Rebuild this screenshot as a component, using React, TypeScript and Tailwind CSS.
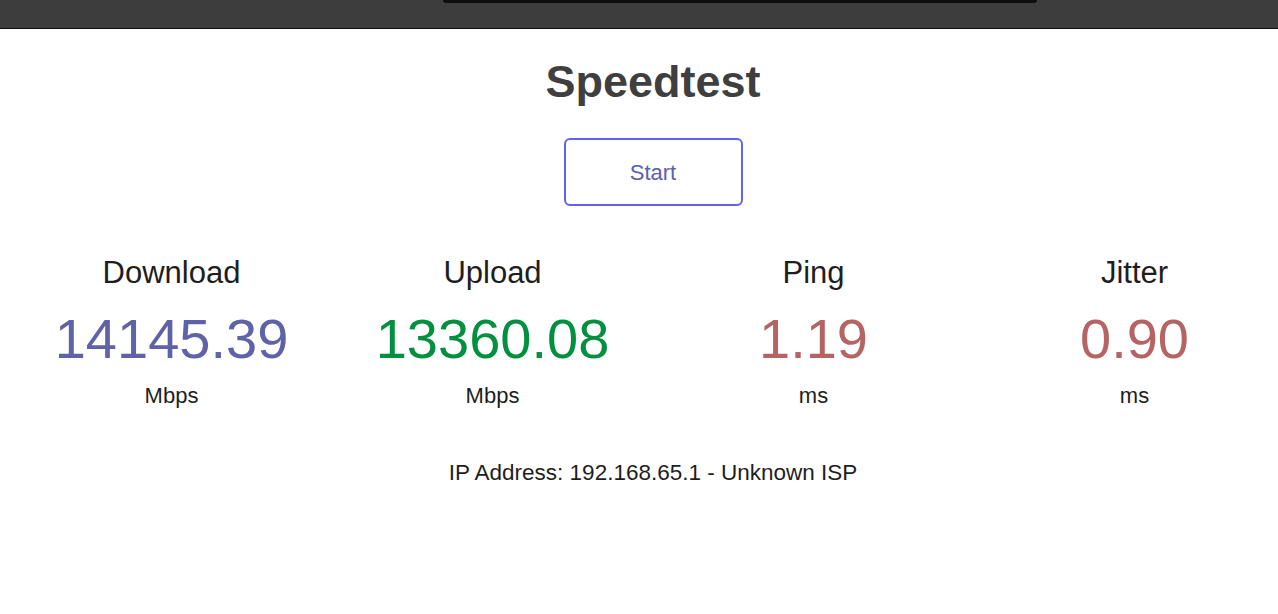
export default function App() {
  const stats = [
    { label: "Download", value: "14145.39", unit: "Mbps", color: "text-[#6062a8]" },
    { label: "Upload", value: "13360.08", unit: "Mbps", color: "text-[#00903e]" },
    { label: "Ping", value: "1.19", unit: "ms", color: "text-[#b56363]" },
    { label: "Jitter", value: "0.90", unit: "ms", color: "text-[#b56363]" },
  ];

  return (
    <div className="min-h-screen overflow-hidden bg-white font-['Liberation_Sans',Arial,sans-serif]">
      {/* browser chrome strip */}
      <div className="h-[29px] bg-[#3d3d3d] border-b border-[#101010]">
        <div className="ml-[443px] w-[594px] h-[3px] rounded-b-[4px] bg-[#0d0d0d]" />
      </div>

      {/* page is a bit wider than the window */}
      <div className="w-[1306px]">
        <div className="flex flex-col items-center">
          <h1 className="mt-[30px] text-[45px] leading-none font-bold text-[#3f3f3f]">Speedtest</h1>

          <button className="mt-[34px] w-[179px] h-[68px] rounded-[6px] border-2 border-[#6161f2] text-[22px] text-[#5c5db4]">
            Start
          </button>
        </div>

        {/* results */}
        <div className="mt-[51px] flex justify-center">
          {stats.map((s) => (
            <div key={s.label} className="w-[321px] flex flex-col items-center">
              <div className="text-[31px] leading-none text-[#1e1e1e]">{s.label}</div>
              <div className={`mt-[23px] text-[56px] leading-none ${s.color}`}>{s.value}</div>
              <div className="mt-[18px] text-[22px] leading-none text-[#1e1e1e]">{s.unit}</div>
            </div>
          ))}
        </div>

        <p className="mt-[55px] text-center text-[22.5px] leading-none text-[#1e1e1e]">
          IP Address: 192.168.65.1 - Unknown ISP
        </p>
      </div>
    </div>
  );
}
